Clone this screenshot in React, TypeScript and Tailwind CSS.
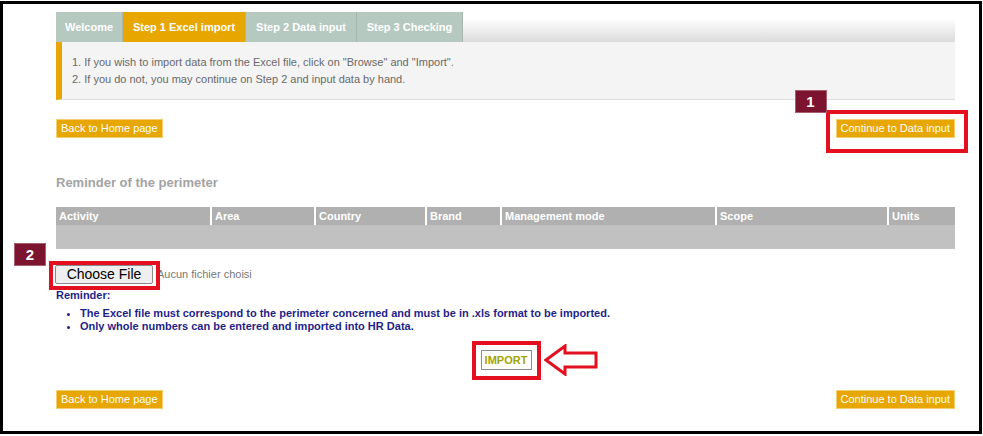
import React from 'react';

const font = { fontFamily: '"Liberation Sans", Arial, sans-serif' };

const tabs = [
  { label: 'Welcome', w: 'w-[67px]', active: false },
  { label: 'Step 1 Excel import', w: 'w-[123px]', active: true },
  { label: 'Step 2 Data input', w: 'w-[111px]', active: false },
  { label: 'Step 3 Checking', w: 'w-[106px]', active: false },
];

const columns = [
  { label: 'Activity', w: 'w-[154px]' },
  { label: 'Area', w: 'w-[104px]' },
  { label: 'Country', w: 'w-[111px]' },
  { label: 'Brand', w: 'w-[75px]' },
  { label: 'Management mode', w: 'w-[215px]' },
  { label: 'Scope', w: 'w-[172px]' },
  { label: 'Units', w: 'w-[67px]' },
];

function OrangeButton({ children, className = '' }: { children: React.ReactNode; className?: string }) {
  return (
    <button
      className={`block h-[19px] px-[4px] bg-[#e8a600] border border-[#f3cf70] text-white text-[11px] leading-[17px] whitespace-nowrap ${className}`}
    >
      {children}
    </button>
  );
}

function Badge({ n, className }: { n: string; className: string }) {
  return (
    <span
      className={`absolute w-[32px] h-[23px] bg-[#7c1430] border border-[#a86070] text-white font-bold text-[15px] leading-[21px] text-center ${className}`}
    >
      {n}
    </span>
  );
}

export default function App() {
  return (
    <div className="w-[983px] h-[436px] bg-white pt-[1px] overflow-hidden" style={font}>
      <div className="w-[982px] h-[433px] border-[3px] border-black">
        <div className="ml-[53px] w-[899px]">
          {/* tabs */}
          <div className="mt-[8px] flex h-[30px] bg-gradient-to-b from-white from-20% to-[#dcdcdc]">
            {tabs.map((t) => (
              <div
                key={t.label}
                className={`${t.w} h-full flex items-center justify-center text-[11px] font-bold text-white border-r border-[#a8b5ae] ${
                  t.active ? 'bg-[#e8a600]' : 'bg-[#b6c9c0]'
                }`}
              >
                {t.label}
              </div>
            ))}
          </div>

          {/* info */}
          <div className="h-[58px] bg-[#f4f4f4] border-l-[6px] border-[#e8a600] border-b border-b-[#dedede] pl-[10px] pt-[12px] text-[11px] leading-[17px] text-[#6a6a6a]">
            <p>1. If you wish to import data from the Excel file, click on "Browse" and "Import".</p>
            <p>2. If you do not, you may continue on Step 2 and input data by hand.</p>
          </div>

          <div className="mt-[19px] flex justify-between items-start h-[19px]">
            <OrangeButton>Back to Home page</OrangeButton>
            <span className="relative flex">
              <OrangeButton>Continue to Data input</OrangeButton>
              <span className="absolute left-[-10px] top-[-9px] right-[-13px] bottom-[-15px] border-[4px] border-[#e4101f]" />
              <Badge n="1" className="left-[-41px] top-[-29px]" />
            </span>
          </div>

          <h2 className="mt-[37px] text-[13px] leading-[16px] font-bold text-[#a3a3a3]">Reminder of the perimeter</h2>

          {/* table */}
          <div className="mt-[16px]">
            <div className="flex h-[18px] bg-[#b0b0b0]">
              {columns.map((c, i) => (
                <div
                  key={c.label}
                  className={`${c.w} pl-[3px] text-[11px] leading-[18px] font-bold text-white ${i > 0 ? 'border-l-2 border-white' : ''}`}
                >
                  {c.label}
                </div>
              ))}
            </div>
            <div className="h-[24px] bg-[#c1c1c1]" />
          </div>

          {/* file */}
          <div className="mt-[16px] flex items-center h-[19px]">
            <span className="relative flex ml-[-1px]">
              <button className="block w-[98px] h-[19px] bg-[#efefef] border border-[#8a8a8a] rounded-[2px] text-[14px] leading-[17px] text-black">
                Choose File
              </button>
              <span className="absolute left-[-6px] top-[-4px] right-[-7px] bottom-[-6px] border-[4px] border-[#e4101f]" />
              <Badge n="2" className="left-[-41px] top-[-22px]" />
            </span>
            <span className="ml-[4px] text-[11px] leading-[19px] text-[#777]">Aucun fichier choisi</span>
          </div>

          <p className="mt-[5px] text-[11px] leading-[13px] font-bold text-[#1f1f8a]">Reminder:</p>
          <ul className="mt-[5px] pl-[24px] list-disc text-[11px] leading-[13px] font-bold text-[#1f1f8a]">
            <li>The Excel file must correspond to the perimeter concerned and must be in .xls format to be imported.</li>
            <li>Only whole numbers can be entered and imported into HR Data.</li>
          </ul>

          <div className="mt-[17px] flex justify-center h-[20px]">
            <span className="relative flex ml-[1px]">
              <button className="block w-[51px] h-[20px] bg-white border border-[#8c8c8c] text-[11px] font-bold text-[#a3a300] leading-[18px]">
                IMPORT
              </button>
              <span className="absolute left-[-9px] top-[-9px] right-[-9px] bottom-[-10px] border-[4px] border-[#e4101f]" />
              <svg className="absolute left-[63px] top-[-6px]" width="54" height="32" viewBox="0 0 54 32">
                <path
                  d="M2 16 L21 2 L21 9 L52 9 L52 23 L21 23 L21 30 Z"
                  fill="white"
                  stroke="#e4101f"
                  strokeWidth="3"
                  strokeLinejoin="miter"
                />
              </svg>
            </span>
          </div>

          <div className="mt-[20px] flex justify-between">
            <OrangeButton>Back to Home page</OrangeButton>
            <OrangeButton>Continue to Data input</OrangeButton>
          </div>
        </div>
      </div>
    </div>
  );
}
